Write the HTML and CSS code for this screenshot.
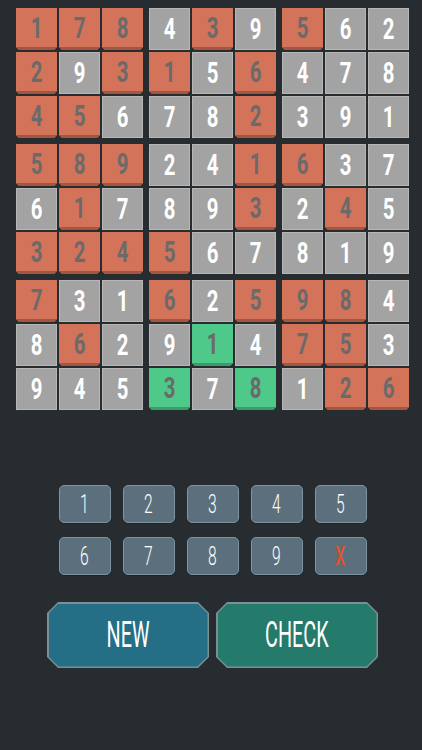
FILE: index.html
```html
<!DOCTYPE html>
<html>
<head>
<meta charset="utf-8">
<link rel="stylesheet" href="styles.css">
</head>
<body>
<div class="app">
  <div class="board">
    <div class="block">
      <div class="c o"><span>1</span></div><div class="c o"><span>7</span></div><div class="c o"><span>8</span></div>
      <div class="c o"><span>2</span></div><div class="c g"><span>9</span></div><div class="c o"><span>3</span></div>
      <div class="c o"><span>4</span></div><div class="c o"><span>5</span></div><div class="c g"><span>6</span></div>
    </div>
    <div class="block">
      <div class="c g"><span>4</span></div><div class="c o"><span>3</span></div><div class="c g"><span>9</span></div>
      <div class="c o"><span>1</span></div><div class="c g"><span>5</span></div><div class="c o"><span>6</span></div>
      <div class="c g"><span>7</span></div><div class="c g"><span>8</span></div><div class="c o"><span>2</span></div>
    </div>
    <div class="block">
      <div class="c o"><span>5</span></div><div class="c g"><span>6</span></div><div class="c g"><span>2</span></div>
      <div class="c g"><span>4</span></div><div class="c g"><span>7</span></div><div class="c g"><span>8</span></div>
      <div class="c g"><span>3</span></div><div class="c g"><span>9</span></div><div class="c g"><span>1</span></div>
    </div>
    <div class="block">
      <div class="c o"><span>5</span></div><div class="c o"><span>8</span></div><div class="c o"><span>9</span></div>
      <div class="c g"><span>6</span></div><div class="c o"><span>1</span></div><div class="c g"><span>7</span></div>
      <div class="c o"><span>3</span></div><div class="c o"><span>2</span></div><div class="c o"><span>4</span></div>
    </div>
    <div class="block">
      <div class="c g"><span>2</span></div><div class="c g"><span>4</span></div><div class="c o"><span>1</span></div>
      <div class="c g"><span>8</span></div><div class="c g"><span>9</span></div><div class="c o"><span>3</span></div>
      <div class="c o"><span>5</span></div><div class="c g"><span>6</span></div><div class="c g"><span>7</span></div>
    </div>
    <div class="block">
      <div class="c o"><span>6</span></div><div class="c g"><span>3</span></div><div class="c g"><span>7</span></div>
      <div class="c g"><span>2</span></div><div class="c o"><span>4</span></div><div class="c g"><span>5</span></div>
      <div class="c g"><span>8</span></div><div class="c g"><span>1</span></div><div class="c g"><span>9</span></div>
    </div>
    <div class="block">
      <div class="c o"><span>7</span></div><div class="c g"><span>3</span></div><div class="c g"><span>1</span></div>
      <div class="c g"><span>8</span></div><div class="c o"><span>6</span></div><div class="c g"><span>2</span></div>
      <div class="c g"><span>9</span></div><div class="c g"><span>4</span></div><div class="c g"><span>5</span></div>
    </div>
    <div class="block">
      <div class="c o"><span>6</span></div><div class="c g"><span>2</span></div><div class="c o"><span>5</span></div>
      <div class="c g"><span>9</span></div><div class="c n"><span>1</span></div><div class="c g"><span>4</span></div>
      <div class="c n"><span>3</span></div><div class="c g"><span>7</span></div><div class="c n"><span>8</span></div>
    </div>
    <div class="block">
      <div class="c o"><span>9</span></div><div class="c o"><span>8</span></div><div class="c g"><span>4</span></div>
      <div class="c o"><span>7</span></div><div class="c o"><span>5</span></div><div class="c g"><span>3</span></div>
      <div class="c g"><span>1</span></div><div class="c o"><span>2</span></div><div class="c o"><span>6</span></div>
    </div>
  </div>

  <div class="keypad">
    <div class="key"><span>1</span></div>
    <div class="key"><span>2</span></div>
    <div class="key"><span>3</span></div>
    <div class="key"><span>4</span></div>
    <div class="key"><span>5</span></div>
    <div class="key"><span>6</span></div>
    <div class="key"><span>7</span></div>
    <div class="key"><span>8</span></div>
    <div class="key"><span>9</span></div>
    <div class="key clear"><span>X</span></div>
  </div>

  <div class="actions">
    <div class="btn btn-new"><div class="btn-face"><span>NEW</span></div></div>
    <div class="btn btn-check"><div class="btn-face"><span>CHECK</span></div></div>
  </div>
</div>
</body>
</html>
```

FILE: styles.css
```css
html, body {
  margin: 0;
  padding: 0;
}
body {
  width: 422px;
  height: 750px;
  overflow: hidden;
  background: #262c30;
  font-family: Roboto, "Liberation Sans", "DejaVu Sans", sans-serif;
}
.app {
  display: flex;
  flex-direction: column;
  align-items: center;
  padding: 8px 0 0 3px;
}
.board {
  display: grid;
  grid-template-columns: repeat(3, auto);
  gap: 6px;
}
.block {
  display: grid;
  grid-template-columns: repeat(3, 41px);
  grid-auto-rows: 42px;
  gap: 2px;
}
.c {
  box-sizing: border-box;
  display: flex;
  align-items: center;
  justify-content: center;
  font-size: 30px;
  font-weight: 700;
  line-height: 1;
}
.c span {
  display: inline-block;
  transform: scaleX(0.68);
}
.c.g {
  background: #a3a3a3;
  border: 1px solid #b7b7b7;
  color: #ffffff;
}
.c.o, .c.n {
  color: #6a6a6a;
  padding-bottom: 3px;
  clip-path: polygon(0 0, 100% 0, 100% calc(100% - 3px), calc(100% - 3px) 100%, 3px 100%, 0 calc(100% - 3px));
}
.c.o {
  background: #d3735a;
  box-shadow: inset 0 -3px 0 #a4563f;
}
.c.n {
  background: #4fc98a;
  box-shadow: inset 0 -3px 0 #3a9c69;
}
.keypad {
  margin-top: 75px;
  display: grid;
  grid-template-columns: repeat(5, 52px);
  grid-auto-rows: 38px;
  column-gap: 12px;
  row-gap: 14px;
}
.key {
  box-sizing: border-box;
  background: #5b707c;
  border: 1px solid #7f94a0;
  border-radius: 5px;
  box-shadow: 0 1px 0 #1c2225;
  display: flex;
  align-items: center;
  justify-content: center;
  color: #ffffff;
  font-size: 26px;
  font-weight: 300;
  line-height: 1;
}
.key span {
  display: inline-block;
  transform: scaleX(0.6);
}
.key.clear {
  color: #e5502a;
  font-weight: 500;
}
.actions {
  margin-top: 27px;
  display: flex;
  gap: 7px;
}
.btn {
  width: 162px;
  height: 66px;
  padding: 1.5px;
  box-sizing: border-box;
  background: #7a8f96;
  clip-path: polygon(11px 0, calc(100% - 11px) 0, 100% 11px, 100% calc(100% - 11px), calc(100% - 11px) 100%, 11px 100%, 0 calc(100% - 11px), 0 11px);
}
.btn-face {
  width: 100%;
  height: 100%;
  display: flex;
  align-items: center;
  justify-content: center;
  color: #ffffff;
  font-size: 36px;
  font-weight: 400;
  line-height: 1;
  clip-path: polygon(10px 0, calc(100% - 10px) 0, 100% 10px, 100% calc(100% - 10px), calc(100% - 10px) 100%, 10px 100%, 0 calc(100% - 10px), 0 10px);
}
.btn-face span {
  display: inline-block;
  transform: scaleX(0.55);
}
.btn-new .btn-face {
  background: #256f86;
}
.btn-check .btn-face {
  background: #257b6b;
}
```
